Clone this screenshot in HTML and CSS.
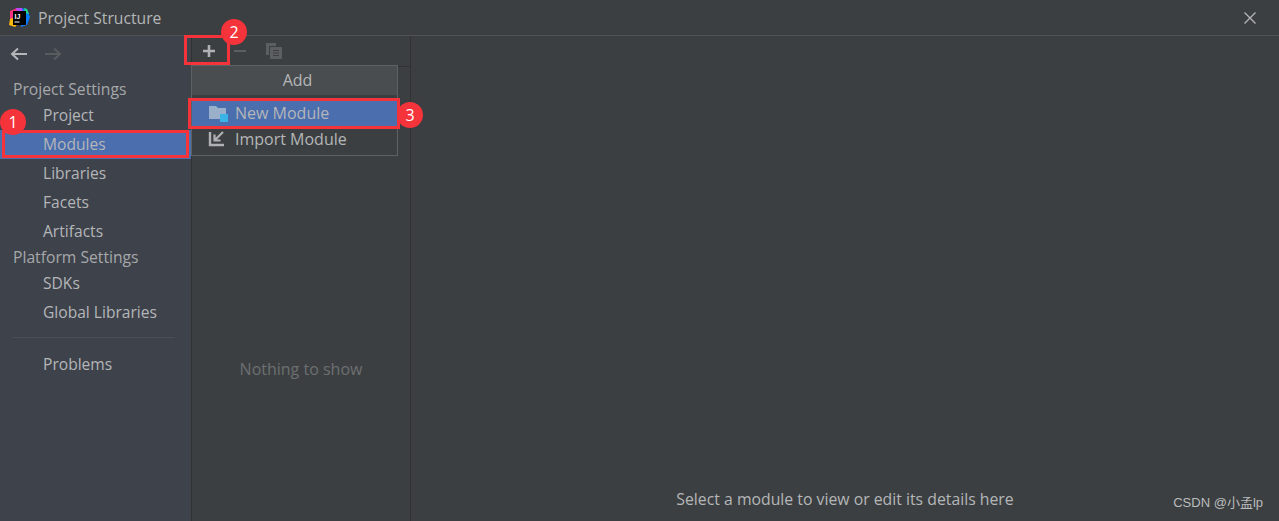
FILE: index.html
```html
<!DOCTYPE html>
<html lang="en">
<head>
    <meta charset="UTF-8">
    <title>Project Structure</title>
    <link rel="stylesheet" href="styles.css">
</head>
<body>
    <div class="window">
        <div class="titlebar">
            <svg class="app-logo" width="21" height="20" viewBox="0 0 21 20">
                <path d="M1 3 L8 0 L13 2 L9 10 L1 13 Z" fill="#f5317f"/>
                <path d="M1 11 L0 17 L6 19 L11 13 L6 9 Z" fill="#fdb60d"/>
                <path d="M11 0 L18 1 L21 9 L18 17 L12 19 Z" fill="#087cfa"/>
                <path d="M7 0 L13 0 L14 4 L8 4 Z" fill="#b74af7"/>
                <path d="M15 0 L18 1 L20 6 L16 5 Z" fill="#21d789"/>
                <rect x="4" y="3" width="13" height="14" fill="#000"/>
                <text class="logo-text" x="5.5" y="10.5">IJ</text>
                <rect x="5.5" y="13.5" width="5" height="1" fill="#fff"/>
            </svg>
            <span class="title">Project Structure</span>
            <svg class="close-icon" width="14" height="14" viewBox="0 0 14 14">
                <path d="M1.5 1.5 L12.5 12.5 M12.5 1.5 L1.5 12.5" stroke="#b4b6b7" stroke-width="1.3" fill="none"/>
            </svg>
        </div>

        <div class="content">
            <div class="sidebar">
                <div class="nav-arrows">
                    <svg width="18" height="14" viewBox="0 0 18 14">
                        <path d="M17 7 H2 M8 1.5 L2 7 L8 12.5" stroke="#b4b6b7" stroke-width="2" fill="none"/>
                    </svg>
                    <svg width="18" height="14" viewBox="0 0 18 14">
                        <path d="M1 7 H16 M10 1.5 L16 7 L10 12.5" stroke="#595c5e" stroke-width="2" fill="none"/>
                    </svg>
                </div>
                <div class="group-title first">Project Settings</div>
                <div class="nav-item head">Project</div>
                <div class="nav-item selected">Modules</div>
                <div class="nav-item">Libraries</div>
                <div class="nav-item">Facets</div>
                <div class="nav-item last">Artifacts</div>
                <div class="group-title">Platform Settings</div>
                <div class="nav-item head">SDKs</div>
                <div class="nav-item">Global Libraries</div>
                <div class="nav-sep"></div>
                <div class="nav-item">Problems</div>
            </div>

            <div class="list-panel">
                <div class="toolbar">
                    <svg width="14" height="14" viewBox="0 0 14 14">
                        <path d="M7 1 V13 M1 7 H13" stroke="#afb1b3" stroke-width="2.6" fill="none"/>
                    </svg>
                    <svg class="minus" width="14" height="14" viewBox="0 0 14 14">
                        <path d="M1 7 H13" stroke="#5c5f61" stroke-width="2" fill="none"/>
                    </svg>
                    <svg class="copy" width="16" height="16" viewBox="0 0 16 16">
                        <path d="M0 0 H10 V3 H3 V12 H0 Z" fill="#5c5f61"/>
                        <rect x="4" y="4" width="12" height="12" rx="1" fill="#5c5f61"/>
                        <path d="M7 7.5 H13 M7 10 H13 M7 12.5 H13" stroke="#3c3f41" stroke-width="1"/>
                    </svg>
                </div>
                <div class="empty">Nothing to show</div>
            </div>

            <div class="detail">Select a module to view or edit its details here</div>
        </div>

        <div class="popup">
            <div class="popup-head">Add</div>
            <div class="popup-row selected">
                <svg width="20" height="18" viewBox="0 0 20 18">
                    <path d="M1 2 H8 L10 4 H18 V15 H1 Z" fill="#9aafca"/>
                    <rect x="12" y="10" width="8" height="8" fill="#3ab4e6"/>
                </svg>
                <span>New Module</span>
            </div>
            <div class="popup-row">
                <svg width="20" height="18" viewBox="0 0 20 18">
                    <path d="M2 2 V15 H16" stroke="#afb1b3" stroke-width="2.4" fill="none"/>
                    <path d="M15 2 L7 10 M6.5 4.5 V10.5 H12.5" stroke="#afb1b3" stroke-width="2.2" fill="none"/>
                </svg>
                <span>Import Module</span>
            </div>
        </div>

        <div class="mark mark-modules"></div>
        <div class="mark mark-add"></div>
        <div class="mark mark-new"></div>
        <div class="badge badge-1">1</div>
        <div class="badge badge-2">2</div>
        <div class="badge badge-3">3</div>

        <div class="watermark">CSDN @小孟lp</div>
    </div>
</body>
</html>
```

FILE: styles.css
```css
body {
    margin: 0;
    overflow: hidden;
    font-family: "Open Sans", "Noto Sans", sans-serif;
    font-size: 16px;
    color: #b4b6b8;
    background-color: #3c3f41;
}
.window {
    position: relative;
    display: flex;
    flex-direction: column;
    height: 521px;
}
.titlebar {
    display: flex;
    align-items: center;
    flex: 0 0 35px;
    padding: 0 22px 0 9px;
    border-bottom: 1px solid #515355;
    background-color: #3c3f41;
}
.app-logo {
    margin-right: 8px;
}
.logo-text {
    font-family: "Liberation Sans", sans-serif;
    font-size: 7px;
    font-weight: bold;
    fill: #fff;
}
.title {
    flex: 1;
    font-size: 15.7px;
}
.content {
    display: flex;
    flex: 1;
    min-height: 0;
}
.sidebar {
    width: 191px;
    flex: none;
    border-right: 1px solid #323232;
    background-color: #3e424b;
}
.nav-arrows {
    display: flex;
    align-items: center;
    gap: 16px;
    height: 36px;
    padding-left: 10px;
}
.group-title {
    height: 25px;
    line-height: 25px;
    padding-left: 13px;
    font-size: 15.7px;
    color: #a6a8aa;
}
.group-title.first {
    margin-top: 5px;
}
.nav-item {
    height: 29px;
    line-height: 29px;
    padding-left: 43px;
    font-size: 15.6px;
}
.nav-item.head {
    height: 28px;
    line-height: 26px;
}
.nav-item.last {
    height: 28px;
    line-height: 28px;
}
.nav-item.selected {
    background-color: #4b6eaf;
}
.nav-sep {
    height: 1px;
    margin: 10px 16px 12px 12px;
    background-color: #4b4e55;
}
.list-panel {
    position: relative;
    display: flex;
    flex-direction: column;
    width: 218px;
    flex: none;
    border-right: 1px solid #323232;
}
.toolbar {
    display: flex;
    align-items: center;
    height: 30px;
    padding-left: 10px;
    border-bottom: 1px solid #323232;
}
.minus {
    margin-left: 17px;
}
.copy {
    margin-left: 19px;
}
.empty {
    margin-top: 291px;
    text-align: center;
    color: #6c6f71;
}
.detail {
    flex: 1;
    display: flex;
    align-items: flex-end;
    justify-content: center;
    padding-bottom: 11px;
    font-size: 15.8px;
    color: #b4b6b8;
}
.popup {
    position: absolute;
    left: 191px;
    top: 65px;
    width: 205px;
    border: 1px solid #5e6163;
    background-color: #3c3f41;
}
.popup-head {
    height: 29px;
    line-height: 29px;
    padding-left: 6px;
    text-align: center;
    background-color: #4a4d4f;
}
.popup-row {
    display: flex;
    align-items: center;
    gap: 7px;
    height: 25px;
    padding-left: 16px;
}
.popup-row.selected {
    height: 27px;
    margin-top: 4px;
    background-color: #4b6eaf;
}
.popup-row:last-child {
    margin-bottom: 4px;
}
.mark {
    position: absolute;
    box-sizing: border-box;
    border: 3px solid #f5333a;
}
.mark-modules {
    left: 2px;
    top: 130px;
    width: 187px;
    height: 28px;
}
.mark-add {
    left: 184px;
    top: 35px;
    width: 46px;
    height: 30px;
}
.mark-new {
    left: 188px;
    top: 98px;
    width: 212px;
    height: 31px;
}
.badge {
    position: absolute;
    width: 26px;
    height: 26px;
    line-height: 26px;
    border-radius: 50%;
    text-align: center;
    font-size: 16px;
    color: #fff;
    background-color: #f5333a;
}
.badge-1 {
    left: 0;
    top: 109px;
}
.badge-2 {
    left: 221px;
    top: 19px;
}
.badge-3 {
    left: 397px;
    top: 102px;
}
.watermark {
    position: absolute;
    right: 16px;
    bottom: 10px;
    font-family: "Liberation Sans", "Noto Sans CJK SC", sans-serif;
    font-size: 13px;
    color: #b9bbbd;
}
```
